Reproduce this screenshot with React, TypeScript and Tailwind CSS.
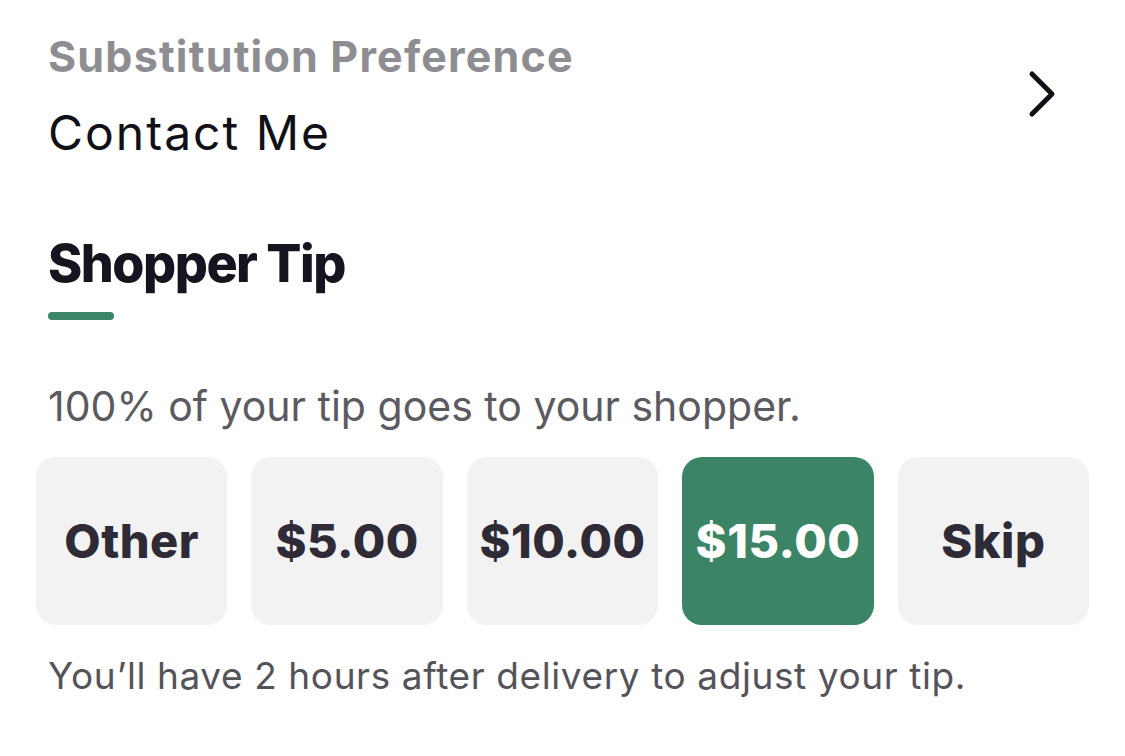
import React, { useState } from 'react';

const tips = ['Other', '$5.00', '$10.00', '$15.00', 'Skip'];

const App: React.FC = () => {
  const [selected, setSelected] = useState('$15.00');

  return (
    <div className="w-[1125px] h-[756px] bg-white overflow-hidden font-['Inter',sans-serif]">
      {/* Substitution Preference */}
      <div className="flex items-center justify-between pl-[48px] pr-[68px] pt-[30px]">
        <div>
          <div className="text-[43px] leading-[52px] font-bold text-[#8e8d92] tracking-[1.2px]">
            Substitution Preference
          </div>
          <div className="mt-[24px] text-[48px] leading-[54px] text-[#111016] tracking-[2px]">Contact Me</div>
        </div>
        <svg width="30" height="48" viewBox="0 0 30 48" className="-mt-[2px]" fill="none">
          <path d="M5 4 L25 24 L5 44" stroke="#111016" strokeWidth="5" strokeLinecap="round" strokeLinejoin="round" />
        </svg>
      </div>

      {/* Shopper Tip */}
      <div className="pl-[48px] pt-[74px]">
        <h2 className="text-[52px] leading-[60px] font-extrabold text-[#17131f] tracking-[-1.5px]">Shopper Tip</h2>
        <div className="mt-[18px] w-[66px] h-[8px] rounded-full bg-[#3d8667]" />
        <p className="mt-[62px] text-[41px] leading-[48px] text-[#5b5a60]">
          100% of your tip goes to your shopper.
        </p>
      </div>

      <div className="grid grid-cols-5 gap-[24px] px-[36px] mt-[27px]">
        {tips.map((t) => (
          <button
            key={t}
            onClick={() => setSelected(t)}
            className={
              t === selected
                ? 'h-[168px] rounded-[20px] bg-[#3b8465] text-white text-[47px] font-extrabold tracking-[0.5px]'
                : 'h-[168px] rounded-[20px] bg-[#f2f2f3] text-[#2e2b36] text-[47px] font-extrabold tracking-[0.5px]'
            }
          >
            {t}
          </button>
        ))}
      </div>

      <p className="pl-[48px] mt-[28px] text-[37px] leading-[46px] text-[#55535a] tracking-[0.6px]">
        You’ll have 2 hours after delivery to adjust your tip.
      </p>
    </div>
  );
};

export default App;
